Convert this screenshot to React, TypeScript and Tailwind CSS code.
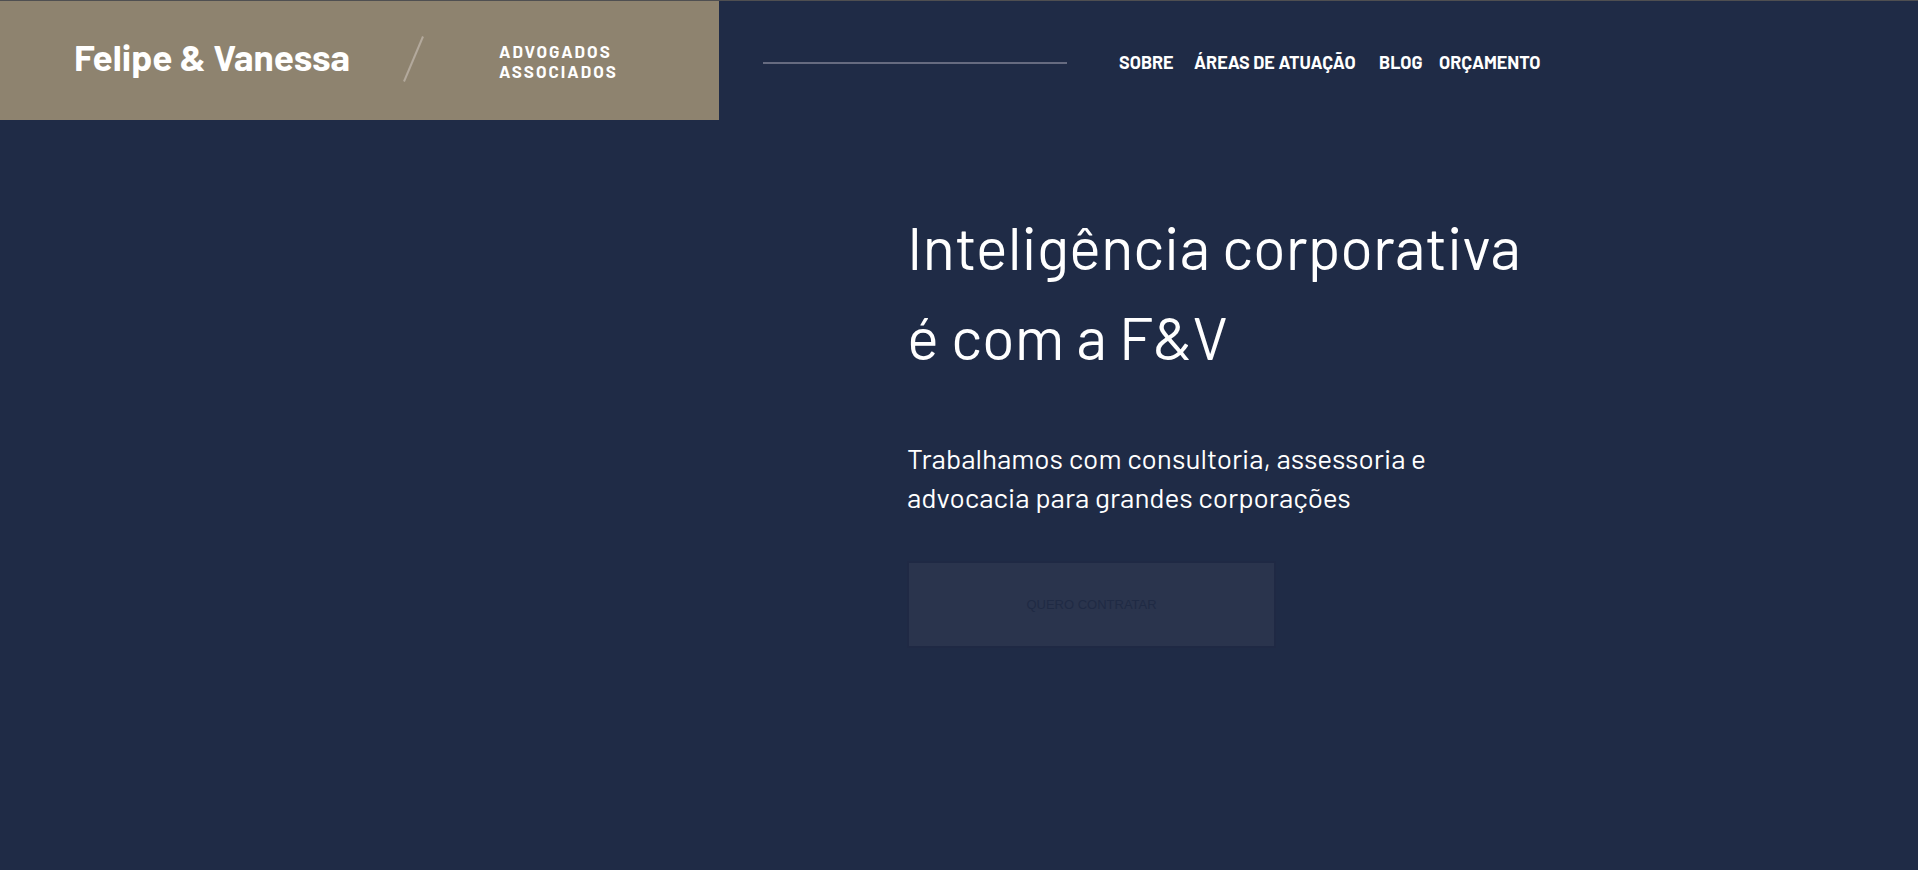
const navLinks = [
  { label: "SOBRE", href: "#sobre", width: "w-[75px]" },
  { label: "ÁREAS DE ATUAÇÃO", href: "#areas", width: "w-[185px]" },
  { label: "BLOG", href: "#blog", width: "w-[60px]" },
  { label: "ORÇAMENTO", href: "#orcamento", width: "" },
];

function Header() {
  return (
    <header className="flex items-stretch border-t border-[#4f4f51]">
      <div className="flex h-[119px] w-[719px] shrink-0 items-start bg-[#8e836f] pl-[74px] pt-[35px]">
        <a href="#inicio" className="w-[329px] whitespace-nowrap text-[37px] leading-[40px] font-bold">
          Felipe &amp; Vanessa
        </a>
        <svg className="h-[46px] w-[22px] shrink-0" viewBox="0 0 22 46" aria-hidden="true">
          <path d="M1 45.500L20 0.500" stroke="#b3a99c" strokeWidth="2" fill="none" />
        </svg>
        <p className="ml-[74px] mt-[5px] text-[17px] leading-[20px] font-bold tracking-[2px]">
          ADVOGADOS
          <br />
          ASSOCIADOS
        </p>
      </div>
      <div className="flex items-center pl-11 pb-1">
        <div className="mt-[9px] h-[2px] w-[304px] bg-[#666b80]" />
        <nav className="ml-[52px] mt-1.5 flex text-lg leading-[20px] font-bold whitespace-nowrap">
          {navLinks.map((link) => (
            <a key={link.label} href={link.href} className={link.width}>
              {link.label}
            </a>
          ))}
        </nav>
      </div>
    </header>
  );
}

export default function App() {
  return (
    <div className="min-h-screen bg-[#1f2b46] font-['Barlow',Roboto,sans-serif] text-white">
      <Header />
      <main className="pl-[907px] pt-[81px]">
        <h1 className="text-[60px] leading-[90px] font-normal">
          Inteligência corporativa
          <br />é com a F&amp;V
        </h1>
        <p className="mt-[58px] text-[28px] leading-[39px]">
          Trabalhamos com consultoria, assessoria e
          <br />
          advocacia para grandes corporações
        </p>
        <button
          type="button"
          className="mt-11 block h-[87px] w-[369px] border-2 border-[#1f2944] bg-[#2a344d] font-['Liberation_Sans',Arial,sans-serif] text-[13px] text-[#1f2a44]"
        >
          QUERO CONTRATAR
        </button>
      </main>
    </div>
  );
}
